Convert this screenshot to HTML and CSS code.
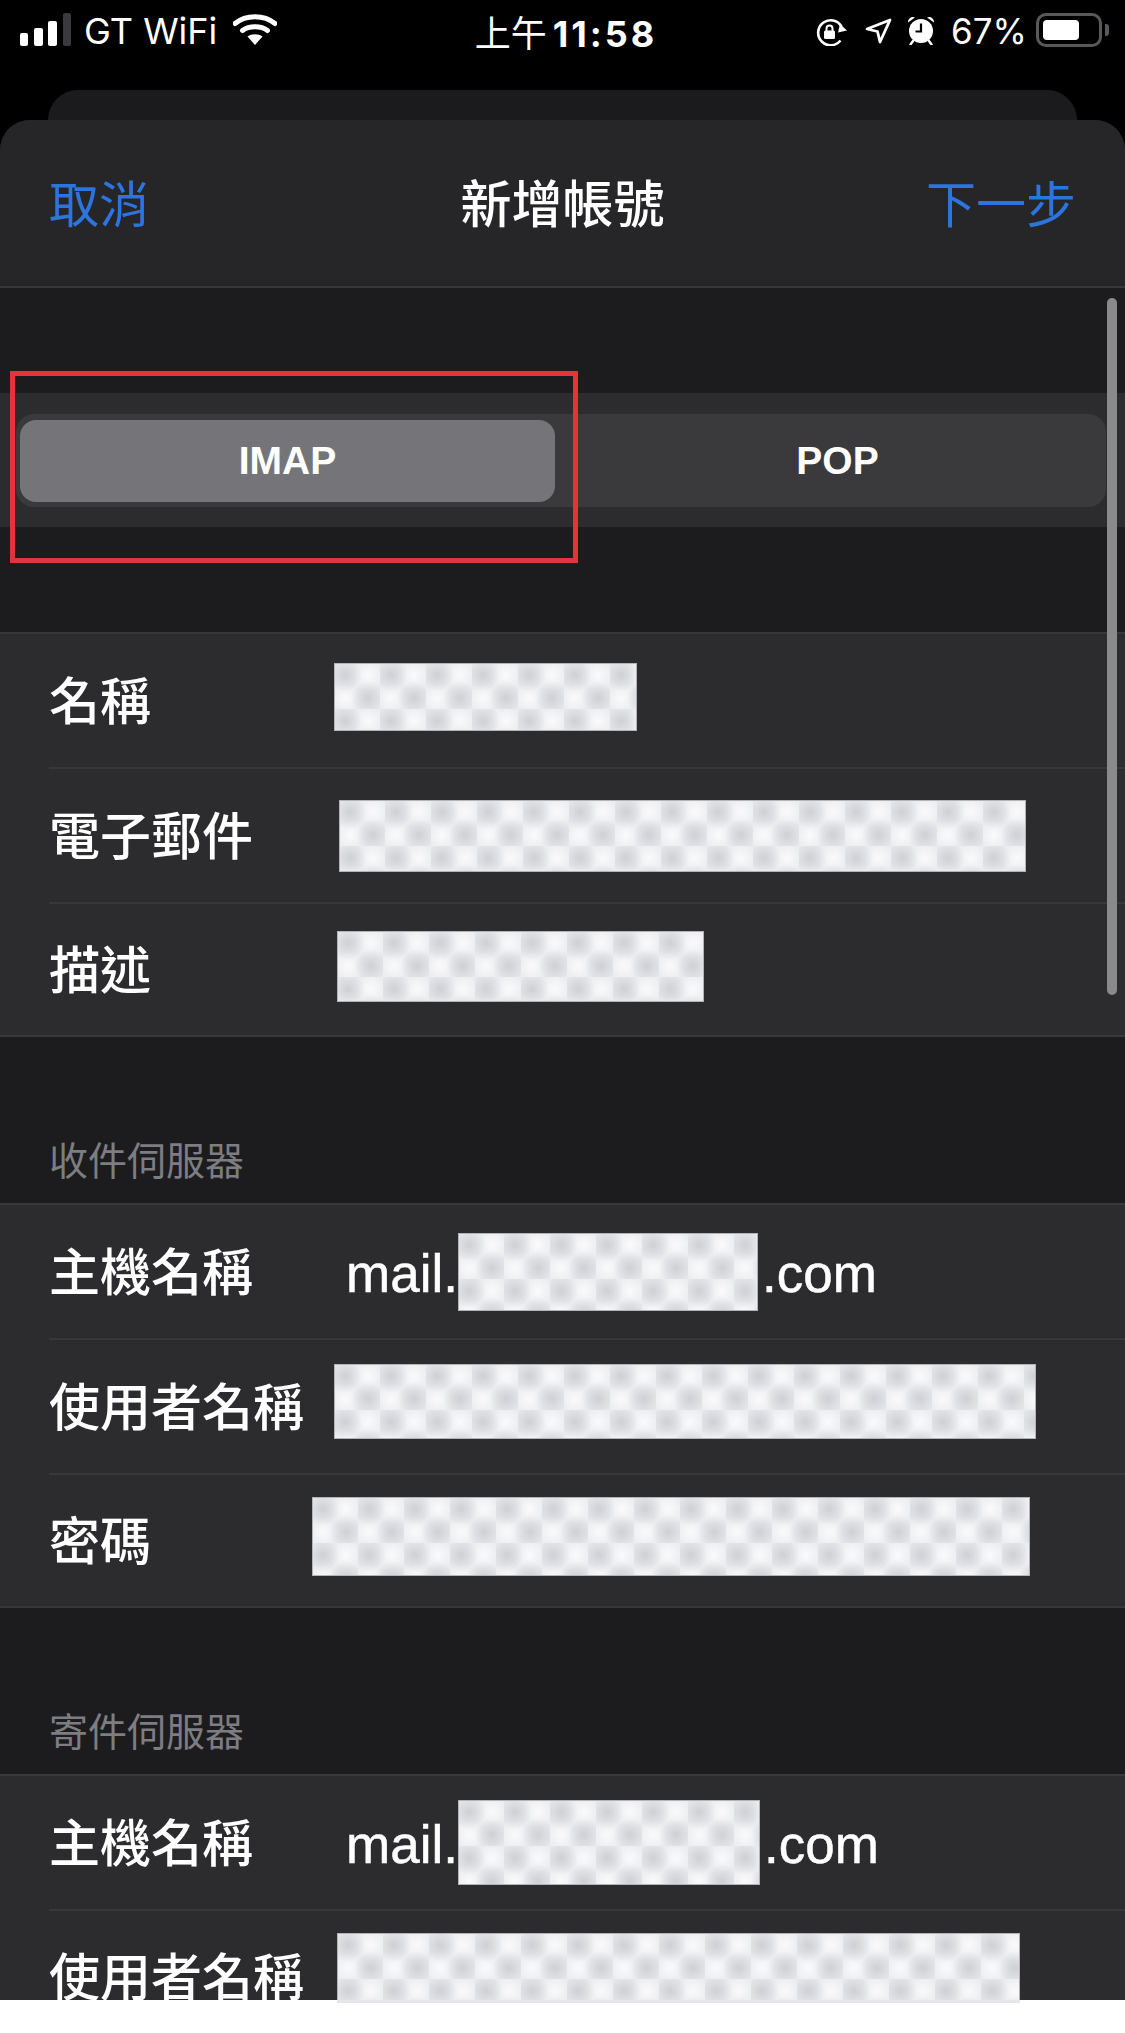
FILE: index.html
```html
<!DOCTYPE html>
<html lang="zh-Hant">
  <head>
    <meta charset="UTF-8" />
    <meta name="viewport" content="width=device-width, initial-scale=1.0" />
    <title>新增帳號</title>
    <link rel="stylesheet" href="styles.css">
  </head>
  <body>
    <div class="screen">
      <div class="statusbar">
        <div class="status-left">
          <svg class="signal" width="51" height="33" viewBox="0 0 51 33">
            <rect x="0" y="20" width="8" height="13" rx="2" fill="#fff" />
            <rect x="14" y="15" width="9" height="18" rx="2" fill="#fff" />
            <rect x="28" y="8" width="9" height="25" rx="2" fill="#fff" />
            <rect x="43" y="0" width="8" height="33" rx="2" fill="#3a3a3c" />
          </svg>
          <span class="carrier">GT WiFi</span>
          <svg class="wifi" width="44" height="32" viewBox="0 0 44 32">
            <path d="M2 10.5C13 1.5 31 1.5 42 10.5" fill="none" stroke="#fff" stroke-width="5" stroke-linecap="round" />
            <path d="M9.5 17.5C16 12.5 28 12.5 34.500 17.500" fill="none" stroke="#fff" stroke-width="5" stroke-linecap="round" />
            <path d="M14.500 23.500C18.500 20.500 25.500 20.500 29.500 23.500L22 32Z" fill="#fff" />
          </svg>
        </div>
        <div class="status-time"><span class="time-ampm">上午</span><span class="time-digits">11:58</span></div>
        <div class="status-right">
          <svg class="rotlock" width="32" height="28" viewBox="0 0 32 28">
            <path d="M25.500 22.500A12.500 12.500 0 1 1 26.500 8.500" fill="none" stroke="#fff" stroke-width="2.600" />
            <path d="M32 12.500L23 14.500L25 6Z" fill="#fff" />
            <rect x="9" y="12.500" width="11" height="8.500" rx="1.500" fill="#fff" />
            <path d="M11.500 13V10.500A3 3 0 0 1 17.500 10.500V13" fill="none" stroke="#fff" stroke-width="2" />
          </svg>
          <svg class="location" width="27" height="26" viewBox="0 0 27 26">
            <path d="M25 2L15 24L12.500 13.500L2 11Z" fill="none" stroke="#fff" stroke-width="2.800" stroke-linejoin="round" />
          </svg>
          <svg class="alarm" width="28" height="30" viewBox="0 0 28 30">
            <circle cx="14" cy="16" r="12" fill="#fff" />
            <path d="M1 7.500A5 5 0 0 1 8 2.500Z" fill="#fff" />
            <path d="M27 7.500A5 5 0 0 0 20 2.500Z" fill="#fff" />
            <path d="M6 26L3.500 29.500M22 26L24.500 29.500" stroke="#fff" stroke-width="2.400" stroke-linecap="round" />
            <path d="M14 8.500V16.500H8.500" fill="none" stroke="#000" stroke-width="2.200" />
          </svg>
          <span class="percent">67%</span>
          <div class="battery"><div class="battery-fill"></div></div>
          <div class="battery-tip"></div>
        </div>
      </div>

      <div class="sheet-back"></div>

      <div class="sheet">
        <div class="nav">
          <span class="nav-link">取消</span>
          <span class="nav-title">新增帳號</span>
          <span class="nav-link nav-next">下一步</span>
        </div>

        <div class="segment-wrap">
          <div class="segment">
            <div class="segment-item selected">IMAP</div>
            <div class="segment-item">POP</div>
          </div>
        </div>

        <div class="group group-first">
          <div class="row">
            <span class="label">名稱</span>
            <div class="blur blur-name"></div>
          </div>
          <div class="row">
            <span class="label">電子郵件</span>
            <div class="blur blur-email"></div>
          </div>
          <div class="row">
            <span class="label">描述</span>
            <div class="blur blur-desc"></div>
          </div>
        </div>

        <div class="section-title">收件伺服器</div>
        <div class="group">
          <div class="row">
            <span class="label">主機名稱</span>
            <span class="value value-host">mail.</span>
            <div class="blur blur-host"></div>
            <span class="value value-tld">.com</span>
          </div>
          <div class="row">
            <span class="label">使用者名稱</span>
            <div class="blur blur-user"></div>
          </div>
          <div class="row">
            <span class="label">密碼</span>
            <div class="blur blur-pass"></div>
          </div>
        </div>

        <div class="section-title">寄件伺服器</div>
        <div class="group">
          <div class="row">
            <span class="label">主機名稱</span>
            <span class="value value-host">mail.</span>
            <div class="blur blur-host2"></div>
            <span class="value value-tld">.com</span>
          </div>
          <div class="row">
            <span class="label">使用者名稱</span>
            <div class="blur blur-user2"></div>
          </div>
        </div>

        <div class="scrollbar"></div>
      </div>

      <div class="highlight"></div>
    </div>
    <div class="footer"><div class="footer-spill"></div></div>
  </body>
</html>
```

FILE: styles.css
```css
* {
  box-sizing: border-box;
}

body {
  margin: 0;
  padding: 0;
  background: #fff;
  font-family: "Liberation Sans", "Noto Sans CJK TC", sans-serif;
  color: #fff;
}

.screen {
  position: relative;
  height: 2000px;
  overflow: hidden;
  background: #000;
}

/* status bar */

.statusbar {
  display: flex;
  align-items: flex-start;
  height: 90px;
  padding: 13px 16px 0 20px;
}

.status-left,
.status-right {
  flex: 1;
  display: flex;
  align-items: flex-start;
}

.status-right {
  justify-content: flex-end;
}

.carrier {
  margin-left: 13px;
  font-family: Inter, sans-serif;
  font-size: 36px;
  line-height: 36px;
}

.wifi {
  margin-left: 16px;
}

.status-time {
  font-family: Inter, "Noto Sans CJK TC", sans-serif;
  font-size: 36px;
  line-height: 36px;
  white-space: nowrap;
}

.time-ampm {
  font-family: "Noto Sans CJK TC", sans-serif;
}

.time-digits {
  margin-left: 6px;
  margin-right: -3px;
  font-weight: 700;
  letter-spacing: 3px;
}

.rotlock {
  margin-top: 5px;
}

.location {
  margin-top: 5px;
  margin-left: 18px;
}

.alarm {
  margin-top: 2px;
  margin-left: 15px;
}

.percent {
  margin-left: 16px;
  font-family: Inter, sans-serif;
  font-size: 35px;
  line-height: 36px;
}

.battery {
  width: 66px;
  height: 34px;
  margin-left: 9px;
  padding: 4px;
  border: 3px solid #59595c;
  border-radius: 10px;
}

.battery-fill {
  width: 36px;
  height: 20px;
  border-radius: 4px;
  background: #fff;
}

.battery-tip {
  width: 4px;
  height: 12px;
  margin-top: 11px;
  margin-left: 3px;
  border-radius: 0 3px 3px 0;
  background: #59595c;
}

/* sheets */

.sheet-back {
  height: 30px;
  margin: 0 48px;
  border-radius: 30px 30px 0 0;
  background: #1b1b1d;
}

.sheet {
  position: relative;
  height: 1880px;
  border-radius: 30px 30px 0 0;
  overflow: hidden;
  background: #1c1c1e;
}

.nav {
  display: flex;
  align-items: center;
  height: 168px;
  padding: 0 53px 5px 49px;
  border-bottom: 2px solid #38383a;
  background: #262628;
  font-family: "Noto Sans CJK TC", sans-serif;
  font-size: 51px;
}

.nav-link {
  flex: 1;
  font-size: 50px;
  color: #2c74de;
}

.nav-next {
  margin-right: -4px;
  text-align: right;
}

.nav-title {
  font-weight: 500;
}

/* IMAP / POP */

.segment-wrap {
  height: 134px;
  margin-top: 105px;
  padding: 21px 19px 0 16px;
  background: #2c2c2e;
}

.segment {
  display: flex;
  height: 93px;
  padding: 6px 0 5px 4px;
  border-radius: 18px;
  background: #3a3a3c;
}

.segment-item {
  flex: 1;
  display: flex;
  align-items: center;
  justify-content: center;
  border-radius: 16px;
  font-size: 39px;
  font-weight: 700;
}

.segment-item.selected {
  flex: 0 0 535px;
  background: #757579;
}

.segment-item + .segment-item {
  padding-left: 14px;
}

/* form groups */

.group {
  border-top: 2px solid #38383a;
  border-bottom: 2px solid #38383a;
  background: #2c2c2e;
}

.group-first {
  margin-top: 105px;
}

.section-title {
  display: flex;
  align-items: flex-end;
  height: 166px;
  padding: 0 0 25px 49px;
  color: #7d7d82;
  font-family: "Noto Sans CJK TC", sans-serif;
  font-size: 39px;
  line-height: 40px;
}

.row {
  display: flex;
  align-items: center;
  height: 133px;
  margin-left: 49px;
}

.row + .row {
  height: 135px;
  border-top: 2px solid #38383a;
}

.row:last-child {
  height: 133px;
}

.label {
  flex: 0 0 260px;
  margin-bottom: 6px;
  font-family: "Noto Sans CJK TC", sans-serif;
  font-size: 51px;
  font-weight: 500;
  white-space: nowrap;
}

.value {
  margin-top: 4px;
  font-size: 53px;
  line-height: 60px;
  -webkit-text-stroke: 0.5px #fff;
}

.value-host {
  width: 112px;
  margin-left: 37px;
}

.value-tld {
  margin-left: 4px;
}

/* redacted fields */

.blur {
  flex: none;
  align-self: flex-start;
  box-shadow: inset 0 0 0 1px #b4b4b8;
  background-color: #e9eaed;
  background-image:
    radial-gradient(circle at 11px 12px, #cfd0d5 0, rgba(207, 208, 213, 0) 17px),
    radial-gradient(circle at 34px 35px, #cfd0d5 0, rgba(207, 208, 213, 0) 17px),
    radial-gradient(circle at 34px 12px, #fafafb 0, rgba(250, 250, 251, 0) 17px),
    radial-gradient(circle at 11px 35px, #fafafb 0, rgba(250, 250, 251, 0) 17px);
  background-size: 46px 46px;
}

.blur-name {
  width: 303px;
  height: 68px;
  margin: 29px 0 0 25px;
}

.blur-email {
  width: 687px;
  height: 72px;
  margin: 31px 0 0 30px;
}

.blur-desc {
  width: 367px;
  height: 71px;
  margin: 27px 0 0 28px;
}

.blur-host {
  width: 300px;
  height: 78px;
  margin-top: 28px;
}

.blur-user {
  width: 702px;
  height: 75px;
  margin: 24px 0 0 25px;
}

.blur-pass {
  width: 718px;
  height: 79px;
  margin: 22px 0 0 3px;
}

.blur-host2 {
  width: 302px;
  height: 85px;
  margin-top: 24px;
}

.blur-user2 {
  width: 683px;
  height: 70px;
  margin: 22px 0 0 28px;
}

/* overlays */

.scrollbar {
  position: absolute;
  top: 178px;
  right: 8px;
  width: 10px;
  height: 697px;
  border-radius: 5px;
  background: #8a8a8c;
}

.highlight {
  position: absolute;
  top: 371px;
  left: 10px;
  width: 568px;
  height: 192px;
  border: 5px solid #e3343c;
}

/* white strip below the screenshot */

.footer {
  height: 33px;
  background: #fff;
}

.footer-spill {
  width: 683px;
  height: 3px;
  margin-left: 337px;
  background: #e4e6ea;
}
```
